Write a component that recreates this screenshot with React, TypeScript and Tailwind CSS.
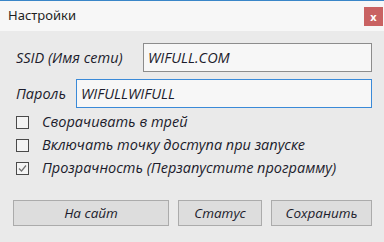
export default function App() {
  const font = { fontFamily: '"Open Sans", "Liberation Sans", sans-serif' };

  const options = [
    { label: "Сворачивать в трей", checked: false },
    { label: "Включать точку доступа при запуске", checked: false },
    { label: "Прозрачность (Перзапустите программу)", checked: true },
  ];

  return (
    <div className="w-[384px] h-[242px] bg-[#eaeaea] flex flex-col overflow-hidden">
      {/* Title bar */}
      <div className="h-[31px] bg-[#f7f7f7] border-t border-[#3a86c8] flex items-center justify-between pl-2 pr-[1px]">
        <span className="text-[13px] text-[#1e1e1e]" style={{ fontFamily: '"Noto Sans", "Open Sans", sans-serif' }}>
          Настройки
        </span>
        <div className="w-[19px] h-[19px] bg-[#c96262] flex items-center justify-center text-white text-[11px] font-bold leading-none">
          x
        </div>
      </div>

      {/* Form */}
      <div className="flex flex-col italic text-[#1c1c2c]" style={font}>
        <div className="flex items-center pl-4 pt-3">
          <span className="w-[127px] text-[14.5px]">SSID (Имя сети)</span>
          <div className="w-[229px] h-[29px] border border-[#8c8c8c] bg-[#f7f7f7] flex items-center pl-1 text-[14.5px]">
            WIFULL.COM
          </div>
        </div>

        <div className="flex items-center pl-4 mt-[7px]">
          <span className="w-[60px] text-[14.5px]">Пароль</span>
          <div className="w-[296px] h-[29px] border border-[#3a8ad8] bg-[#f7f7f7] flex items-center pl-1 text-[14.5px]">
            WIFULLWIFULL
          </div>
        </div>

        <div className="flex flex-col pl-4 mt-[7px] gap-[9px]">
          {options.map((o) => (
            <div key={o.label} className="flex items-center gap-[13px] h-[14px]">
              <div className="w-[13px] h-[13px] border border-[#4a4a4a] bg-[#f4f4f4] flex items-center justify-center">
                {o.checked && (
                  <svg width="9" height="9" viewBox="0 0 9 9">
                    <polyline points="1,4.5 3.5,7 8,1.5" fill="none" stroke="#707070" strokeWidth="1.2" />
                  </svg>
                )}
              </div>
              <span className="text-[14.5px] leading-none">{o.label}</span>
            </div>
          ))}
        </div>

        <div className="flex pl-[13px] mt-[25px] gap-[9px] text-[13.5px]">
          <button className="w-[156px] h-[26px] border border-[#ababab] bg-[#dddddd] italic">На сайт</button>
          <button className="w-[84px] h-[26px] border border-[#ababab] bg-[#dddddd] italic">Статус</button>
          <button className="w-[101px] h-[26px] border border-[#ababab] bg-[#dddddd] italic">Сохранить</button>
        </div>
      </div>
    </div>
  );
}
